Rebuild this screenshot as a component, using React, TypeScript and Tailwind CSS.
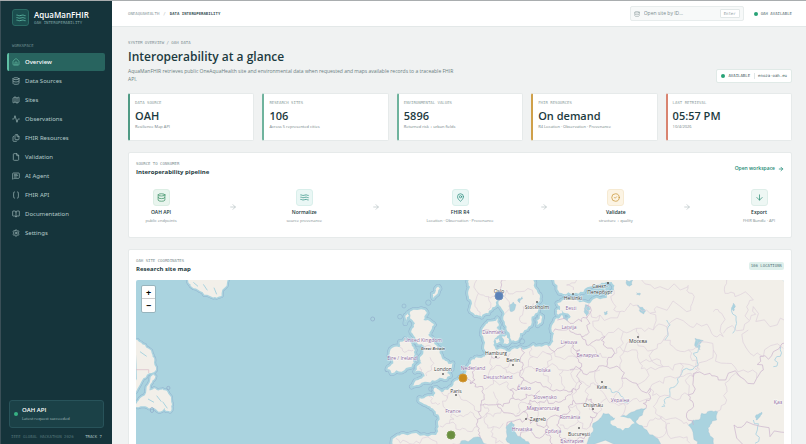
import React from 'react'
import {
  Activity,
  ArrowDown,
  ArrowRight,
  BookOpen,
  Braces,
  CircleCheck,
  Database,
  File,
  Files,
  House,
  Map as MapIcon,
  MapPin,
  MessageSquareText,
  Settings
} from 'lucide-react'

type IconType = React.ComponentType<{ className?: string; strokeWidth?: number }>
type Point = [number, number]

/* ================= ICONS ================= */
function Waves({ className }: { className?: string; strokeWidth?: number }) {
  return (
    <svg viewBox="0 0 24 24" fill="none" stroke="currentColor" strokeWidth="2" strokeLinecap="round" className={className}>
      <path d="M2 5c3 0 3 1.500 6.500 1.500S13 5 16 5s3 1.500 6 1.500" />
      <path d="M2 11c3 0 3 1.500 6.500 1.500S13 11 16 11s3 1.500 6 1.500" />
      <path d="M2 17c3 0 3 1.500 6.500 1.500S13 17 16 17s3 1.500 6 1.500" />
    </svg>
  )
}

/* ================= DATA ================= */
const navItems: { label: string; icon: IconType }[] = [
  { label: 'Overview', icon: House },
  { label: 'Data Sources', icon: Database },
  { label: 'Sites', icon: MapIcon },
  { label: 'Observations', icon: Activity },
  { label: 'FHIR Resources', icon: Files },
  { label: 'Validation', icon: File },
  { label: 'AI Agent', icon: MessageSquareText },
  { label: 'FHIR API', icon: Braces },
  { label: 'Documentation', icon: BookOpen },
  { label: 'Settings', icon: Settings }
]

const stats = [
  { label: 'DATA SOURCE', value: 'OAH', note: 'Resilience Map API', edge: 'border-l-[#4f9a84]' },
  { label: 'RESEARCH SITES', value: '106', note: 'Across 5 represented cities', edge: 'border-l-[#6fb39d]' },
  { label: 'ENVIRONMENTAL VALUES', value: '5896', note: 'Returned risk + urban fields', edge: 'border-l-[#6fb39d]' },
  { label: 'FHIR RESOURCES', value: 'On demand', note: 'R4 Location · Observation · Provenance', edge: 'border-l-[#cfa04a]' },
  { label: 'LAST RETRIEVAL', value: '05:57 PM', note: '10/4/2026', edge: 'border-l-[#d98470]' }
]

const steps: { title: string; note: string; icon: IconType; tone: string }[] = [
  { title: 'OAH API', note: 'public endpoints', icon: Database, tone: 'bg-[#e9f5ee] border-[#dceee4] text-[#3f9168]' },
  { title: 'Normalize', note: 'source provenance', icon: Waves, tone: 'bg-[#eaf7f5] border-[#d9efeb] text-[#2f8f80]' },
  { title: 'FHIR R4', note: 'Location · Observation · Provenance', icon: MapPin, tone: 'bg-[#eaf7f5] border-[#d9efeb] text-[#2f8f80]' },
  { title: 'Validate', note: 'structure + quality', icon: CircleCheck, tone: 'bg-[#fcf4e4] border-[#f6ead2] text-[#c9973a]' },
  { title: 'Export', note: 'FHIR Bundle · API', icon: ArrowDown, tone: 'bg-[#eef7f4] border-[#deeee9] text-[#2f8f78]' }
]

/* ================= MAP GEOMETRY ================= */
// splits every segment and pushes the middle sideways, so coasts and borders look natural
function rough(points: Point[], amount: number, depth = 2): Point[] {
  let pts = points
  for (let d = 0; d < depth; d++) {
    const next: Point[] = [pts[0]]
    for (let i = 1; i < pts.length; i++) {
      const [x1, y1] = pts[i - 1]
      const [x2, y2] = pts[i]
      const n = Math.sin(x1 * 12.9 + y1 * 78.2 + x2 * 3.7 + y2 * 5.1) * 43758.5
      // long edges lie outside the view and stay straight
      const far = Math.abs(x2 - x1) + Math.abs(y2 - y1) > 200
      const k = far ? 0 : (n - Math.floor(n) - 0.5) * amount
      next.push([(x1 + x2) / 2 - (y2 - y1) * k, (y1 + y2) / 2 + (x2 - x1) * k])
      next.push(pts[i])
    }
    pts = next
  }
  return pts
}

function parse(text: string): Point[] {
  return text.split(' ').map(p => p.split(',').map(Number) as Point)
}

function toPath(text: string, amount = 0.6, close = false) {
  const pts = parse(text)
  if (close) pts.push(pts[0])
  return 'M' + rough(pts, amount).map(([x, y]) => `${x.toFixed(1)} ${y.toFixed(1)}`).join('L') + (close ? 'Z' : '')
}

const lands = [
  // mainland
  '90,640 104,540 108,500 130,492 180,497 228,495 236,470 238,440 222,420 205,408 180,395 178,384 205,378 222,380 226,368 222,355 235,358 245,366 262,360 276,350 283,335 300,322 318,308 325,290 335,270 350,262 368,262 380,255 372,235 370,200 372,170 385,155 412,145 415,160 410,175 418,190 405,205 400,225 412,240 430,238 450,245 480,232 520,225 545,230 565,228 580,215 582,190 580,160 590,145 605,135 612,148 625,155 632,140 612,128 600,120 592,100 605,92 640,88 680,98 700,88 740,84 762,60 755,36 725,38 700,48 670,66 640,72 610,72 592,58 590,20 590,-400 1800,-400 1800,1000 90,1000',
  // scandinavia
  '328,-60 326,30 330,50 325,75 335,95 330,120 345,135 365,140 385,130 405,110 415,88 422,110 430,140 440,170 450,195 455,212 475,210 480,190 505,170 515,140 535,120 530,100 540,80 530,60 520,30 520,-60',
  // great britain
  '150,125 195,120 200,130 190,150 215,158 222,165 210,185 205,195 222,215 238,235 245,262 255,272 278,280 275,298 262,310 270,318 255,328 225,332 195,335 175,345 155,350 175,330 195,318 190,308 165,305 170,290 185,280 180,262 190,250 195,235 185,222 165,215 160,195 155,180 165,160 150,145',
  // ireland
  '120,215 135,208 155,222 165,240 160,265 155,290 125,305 95,310 82,298 100,280 88,258 92,238 118,232',
  // northern isles, hebrides
  '218,72 228,62 236,50 239,56 228,75 220,84',
  '136,140 143,130 147,136 141,150 136,160',
  // danish islands, gotland, saaremaa
  '425,200 440,195 447,208 443,222 430,222',
  '405,208 418,205 422,216 410,220',
  '532,150 541,136 547,140 541,160 533,166',
  '590,122 604,120 606,130 595,134'
]

const westLands = [
  '198,90 205,112 215,125 240,138 270,153 290,158 305,152 312,130 322,90',
  '30,275 52,285 75,300 95,325 103,345 108,375 95,384 70,400 48,440 30,440',
  '48,486 52,470 66,455 80,425 92,396 100,388 106,394 96,412 88,436 102,430 120,434 135,436 148,450 156,478 150,500 138,498 134,488 116,500 98,488 76,484'
]

const waters = [
  // mediterranean and adriatic
  '290,600 298,525 305,512 340,503 365,508 385,525 400,600',
  '438,600 450,520 440,490 440,468 455,455 461,475 482,500 505,515 525,540 540,600',
  // black sea
  '680,530 690,495 697,470 720,445 730,430 750,435 760,445 785,438 800,437 830,420 858,415 848,430 835,445 830,460 860,480 885,500 900,540',
  // caspian
  '985,465 1000,450 1015,450 1025,430 1050,423 1073,425 1070,450 1050,465 1045,485 1060,505 1075,540 1015,540 1000,495',
  // lakes
  '800,30 818,30 816,44 802,46',
  '832,105 848,112 856,124 850,132 838,122',
  '830,68 842,72 838,76 830,74',
  '732,126 742,124 742,132 734,134',
  '448,105 460,96 468,104 458,124 450,122',
  '474,88 486,80 488,86 480,98',
  '676,104 684,106 686,130 680,138 674,120',
  '1005,205 1030,212 1015,222 1020,240 1008,232',
  '1120,100 1126,110 1122,122 1116,114',
  '1186,440 1196,432 1205,426 1200,440 1188,450'
]

const crimea = '752,452 785,440 810,445 824,460 805,474 772,474'

const rivers = [
  '1010,210 1000,250 1012,275 990,300 960,320 945,350',
  '945,350 930,370 915,400 905,410',
  '745,355 760,368 790,382 805,400',
  '1115,112 1128,150 1118,190',
  '1180,450 1192,480 1185,520',
  '920,150 922,180 915,210',
  '1240,290 1250,260 1262,230'
]

const borders = [
  '300,322 318,325 330,340 345,350 370,358 372,380 362,405 355,425 362,445 352,470 356,495 365,508',
  '325,290 345,300 345,330 330,340',
  '380,255 395,262 420,262',
  '372,180 390,186 412,180',
  '484,232 482,262 490,285 480,310 492,330 475,345 450,360 460,385 440,400 415,402 385,405 362,405',
  '492,330 520,338 545,345 570,358 610,360 640,355 665,340 655,310 665,290 650,262 660,240 640,225 605,232 565,228',
  '460,385 490,388 515,375 540,362',
  '415,402 425,420 460,432 490,425 515,410 510,390 540,395 580,400 610,390 625,375 640,355',
  '490,425 500,445 530,455 560,465 600,440 625,410 640,390 680,385 700,400 712,430 690,440 690,470',
  '440,468 470,450 500,445',
  '480,500 520,492 555,490 560,465',
  '555,490 570,510 590,525 620,515 650,510 690,495',
  '600,440 590,465 600,490 620,515',
  '580,185 610,180 640,188 665,200 680,195 690,160 682,140 680,105',
  '592,150 630,160 665,155 682,140',
  '665,200 680,225 700,215 735,200 730,225 755,262 740,290 700,305 665,300 630,300',
  '740,290 780,295 785,325 830,340 870,355 872,385 850,400 858,415',
  '985,375 1000,330 1050,310 1075,330 1140,320 1190,325 1210,300 1200,260 1240,245 1300,230',
  '1000,465 980,430 1000,400 985,375',
  '1120,600 1122,465 1160,455 1230,500 1300,480',
  '415,88 430,70 425,45 440,20'
]

const regions = [
  '690,100 680,120 720,135 780,125 800,115 830,105',
  '735,200 790,185 830,175 880,180 920,170 985,165',
  '830,105 870,130 890,110 980,125 1000,90 980,60 985,45',
  '845,30 900,50 985,50',
  '920,170 910,210 940,230 985,240 1010,270 1000,320 980,340 985,375',
  '985,165 1010,160 1055,190 1090,200 1085,130 1060,125',
  '780,295 790,250 830,210 880,240 910,290 860,300 830,345',
  '910,290 960,280 1010,300 1060,240 1100,280 1150,300 1190,325',
  '1100,30 1095,70 1125,80 1180,90 1165,120 1150,180 1090,190',
  '1165,180 1170,250 1210,260 1270,235',
  '1170,150 1180,110 1230,170 1300,155',
  '1070,425 1100,390 1095,340 1140,320',
  '870,355 900,380 880,410 905,440 960,450 985,465',
  '900,440 920,480 960,500 990,520',
  '500,160 480,140 490,110 520,100',
  '108,505 140,515 180,520 230,515 260,525 300,522',
  '640,60 620,45 650,30',
  '245,366 262,385 250,410 275,430 268,460 240,468',
  '262,385 300,380 325,395 355,425',
  '275,430 310,440 340,430 352,450',
  '268,460 300,480 330,485 352,470',
  '205,378 215,400 240,400',
  '395,262 390,300 400,330 375,358',
  '390,300 430,295 450,250',
  '400,330 440,335 450,360',
  '430,295 455,310 480,310',
  '400,365 410,402',
  '510,228 520,260 505,290 492,330',
  '520,260 560,250 600,262 650,262',
  '560,250 565,290 550,315 570,358',
  '505,290 540,300 565,290 610,300 665,290',
  '610,300 605,330 610,360',
  '370,405 380,430 375,460 400,470 430,460',
  '362,445 400,440 425,420',
  '400,470 395,500 430,520',
  '470,432 475,405 515,400',
  '540,395 535,430 530,455',
  '625,410 660,425 655,455 690,470',
  '655,455 630,470 600,465',
  '720,300 715,345 740,385 712,430',
  '640,300 650,340 690,350 715,345',
  '690,350 680,385',
  '785,325 770,370 790,400 785,438',
  '740,385 790,400 830,385 872,385',
  '690,225 700,260 740,262',
  '640,225 650,262 700,260',
  '650,340 640,390',
  '790,185 780,230 755,262',
  '830,175 835,210',
  '780,230 830,240 840,280 860,300',
  '840,280 880,270 910,290',
  '910,210 880,240',
  '985,240 1010,230 1060,240',
  '960,280 960,320 910,340 870,355',
  '1000,320 960,320',
  '900,380 950,390 985,375',
  '720,135 710,180 735,200',
  '780,125 760,100 762,60',
  '870,130 880,180',
  '700,400 690,420',
  '350,30 355,70 345,110 360,135',
  '355,70 385,80 410,75',
  '385,80 385,120',
  '440,60 480,65 520,75',
  '440,60 435,130',
  '195,235 215,232',
  '210,262 215,300 200,318',
  '120,232 140,245 160,240',
  '178,290 186,300 190,312',
  '885,500 920,480 930,460',
  '850,470 880,450 905,440'
]

const countries: [string, number, number][] = [
  ['United Kingdom', 287, 62],
  ['Éire / Ireland', 266, 80],
  ['Danmark', 357, 54],
  ['Nederland', 337, 90],
  ['Deutschland', 362, 99],
  ['Polska', 407, 92],
  ['Česko', 388, 110],
  ['Slovensko', 409, 119],
  ['Magyarország', 407, 130],
  ['France', 317, 133],
  ['Hrvatska', 386, 151],
  ['Србија', 417, 153],
  ['România', 434, 139],
  ['Eesti', 435, 30],
  ['Latvija', 433, 49],
  ['Lietuva', 433, 64],
  ['България', 436, 163],
  ['Беларусь', 452, 77],
  ['Україна', 484, 122],
  ['Қаз', 642, 124]
]

// label, label x/y, dot x/y
const cities: [string, number, number, number, number][] = [
  ['London', 307, 91, 307, 94],
  ['Paris', 320, 113, 320, 115],
  ['Hamburg', 360, 75, 360, 77],
  ['Berlin', 377, 82, 377, 85],
  ['Stockholm', 401, 29, 401, 22],
  ['Oslo', 363, 13, 363, 16],
  ['Helsinki', 437, 20, 437, 14],
  ['Zagreb', 402, 141, 390, 139],
  ['București', 443, 156, 443, 148],
  ['Chișinău', 457, 127, 457, 129],
  ['Київ', 466, 109, 466, 102],
  ['Москва', 502, 63, 502, 57],
  ['Санкт-', 464, 8, 472, 3],
  ['Петербург', 464, 14, 472, 3]
]

function SiteMap() {
  return (
    <svg viewBox="0 0 648 180" preserveAspectRatio="xMidYMin slice" className="block w-full bg-[#aad3df]" role="img" aria-label="Research site map">
      <g transform="translate(-16 -35) scale(0.33333)" strokeLinejoin="round">
        {westLands.map(d => <path key={d} d={toPath(d, 0.4, true)} fill="none" stroke="#93b3cf" strokeWidth="12" />)}
        {westLands.map(d => <path key={d} d={toPath(d, 0.4, true)} fill="#f2efe9" stroke="#aad3df" strokeWidth="9" />)}
        {westLands.map(d => <path key={d} d={toPath(d, 0.4, true)} fill="#f2efe9" />)}
        <path d="M48 374h38v10" fill="none" stroke="#d9b9c6" strokeWidth="2" />
        <path d="M220 112l14 12M250 118l12 18M282 128l8 20M60 320l20 14M110 452l14 18M128 470l14 20M84 462l18 10" stroke="#aad3df" strokeWidth="3" />
        <circle cx="758" cy="222" r="6" fill="none" stroke="#8fa9c8" strokeWidth="2" />
        <circle cx="145" cy="429" r="5" fill="none" stroke="#8fa9c8" strokeWidth="2" />
        <ellipse cx="96" cy="495" rx="5" ry="8" fill="none" stroke="#8fa9c8" strokeWidth="2" />
      </g>
      <g transform="translate(224 -10) scale(0.33333)" strokeLinejoin="round" fill="none">
        <g stroke="#93b3cf" strokeWidth="16">
          {lands.map(d => <path key={d} d={toPath(d, 0.5, true)} />)}
        </g>
        <g stroke="#aad3df" strokeWidth="13">
          {lands.map(d => <path key={d} d={toPath(d, 0.5, true)} />)}
        </g>
        <g fill="none" stroke="#93b3cf" strokeWidth="2">
          <circle cx="120" cy="140" r="7" />
          <circle cx="132" cy="108" r="6" />
          <circle cx="205" cy="98" r="8" />
          <circle cx="213" cy="357" r="7" />
          <circle cx="486" cy="214" r="8" />
        </g>
        {lands.map(d => <path key={d} d={toPath(d, 0.5, true)} fill="#f2efe9" />)}
        <g fill="#aad3df" stroke="#9bbfd4" strokeWidth="1">
          {waters.map(d => <path key={d} d={toPath(d, 0.5, true)} />)}
        </g>
        <path d={toPath(crimea, 0.5, true)} fill="#f2efe9" />
        <g stroke="#b5d6e2" strokeWidth="3">
          {rivers.map(d => <path key={d} d={toPath(d, 0.9)} />)}
        </g>
        <g stroke="#dccfdb" strokeWidth="2">
          {regions.map(d => <path key={d} d={toPath(d, 0.8)} />)}
        </g>
        <g stroke="#c9b0cc" strokeWidth="2">
          {borders.map(d => <path key={d} d={toPath(d, 0.8)} />)}
        </g>
      </g>
      <g textAnchor="middle" stroke="#ffffff" strokeWidth="1" strokeOpacity="0.7" paintOrder="stroke" className="text-[5px]">
        {countries.map(([name, x, y]) => <text key={name} x={x} y={y} fill="#8d6a9f">{name}</text>)}
        {cities.map(([name, x, y]) => <text key={name} x={x} y={y} fill="#3c3c3c">{name}</text>)}
        <text x="297" y="70" fill="#3c3c3c" className="text-[4px] font-semibold italic">Great Britain</text>
      </g>
      {cities.map(([name, , , x, y]) => <circle key={name} cx={x} cy={y} r="1" fill="#666666" />)}
      <circle cx="363" cy="16" r="4" fill="#5b82b8" stroke="#6d8fbd" />
      <circle cx="327" cy="98" r="4" fill="#c98a1b" stroke="#cf983a" />
      <circle cx="315" cy="155" r="4" fill="#6a8f3f" stroke="#7c9c55" />
    </svg>
  )
}

/* ================= SIDEBAR ================= */
function Sidebar() {
  return (
    <aside className="flex w-28 shrink-0 flex-col border-l border-[#3a4f57] bg-[#15343b] text-[#b4cac9]">
      <div className="flex items-center gap-[5px] pt-2 pl-[11px]">
        <div className="flex size-[17px] items-center justify-center rounded-[3px] border border-[#2b6a64] bg-[#1b4d4e] text-[#62bfa9]">
          <Waves className="size-[10px]" />
        </div>
        <div>
          <div className="text-[8px] leading-[9px] font-semibold text-white">AquaManFHIR</div>
          <div className="font-['DejaVu_Sans_Mono',monospace] text-[4px] leading-[7px] text-[#7fa3a3]">OAH INTEROPERABILITY</div>
        </div>
      </div>

      <div className="mt-[17px] pl-[11px] font-['DejaVu_Sans_Mono',monospace] text-[4px] leading-[6px] text-[#6d8e90]">WORKSPACE</div>
      <nav className="mt-1 flex flex-col gap-px pr-[7px] pl-[6px] font-['Noto_Sans','Open_Sans',sans-serif]">
        {navItems.map(({ label, icon: Icon }, i) => (
          <a
            key={label}
            href="#"
            className={`flex h-[18px] items-center gap-[5px] rounded-[2px] border-l-2 pl-[3px] text-[6px] ${i === 0 ? 'border-[#5fc0a5] bg-[#28645f] font-medium text-white' : 'border-transparent'}`}
          >
            <Icon className={`size-2 ${i === 0 ? 'text-[#67bfa6]' : 'text-[#a3bdbd]'}`} strokeWidth={2} />
            {label}
          </a>
        ))}
      </nav>

      <div className="mt-auto mr-2 ml-2 flex h-7 items-center gap-1 rounded-[3px] border border-[#28535a] bg-[#1b4147] pl-1">
        <span className="size-1 rounded-full bg-[#37b183]" />
        <div>
          <div className="text-[6px] leading-[9px] font-semibold text-white">OAH API</div>
          <div className="text-[4px] leading-[8px] text-[#a3bcbc]">Latest request succeeded</div>
        </div>
      </div>
      <div className="flex justify-between pt-[6px] pr-[10px] pb-1 pl-[10px] font-['DejaVu_Sans_Mono',monospace] text-[4px] leading-[6px]">
        <span className="text-[#54757a]">IEEE GLOBAL HACKATHON 2026</span>
        <span className="text-[#a9c2c2]">TRACK 7</span>
      </div>
    </aside>
  )
}

function Eyebrow({ children }: { children: React.ReactNode }) {
  return <div className="font-['DejaVu_Sans_Mono',monospace] text-[4px] leading-[6px] text-[#7d8f92]">{children}</div>
}

/* ================= PAGE ================= */
export default function App() {
  return (
    <div className="flex h-screen overflow-hidden border-t border-[#a9adaf] bg-[#f0f2f2] font-['Open_Sans','Noto_Sans',sans-serif] text-[#1c3a40]">
      <Sidebar />

      <div className="flex min-w-0 flex-1 flex-col">
        {/* TOP BAR */}
        <header className="flex h-[26px] shrink-0 items-center border-b border-[#e3e8e8] bg-white pr-[14px] pl-4 font-['DejaVu_Sans_Mono',monospace] text-[4px]">
          <span className="text-[#87979a]">ONEAQUAHEALTH</span>
          <span className="px-1 text-[#a8b4b6]">/</span>
          <span className="font-bold text-[#3b5358]">DATA INTEROPERABILITY</span>
          <label className="ml-auto flex h-[15px] w-[114px] items-center gap-1 rounded-[2px] border border-[#e7ecec] bg-[#f7f9f9] px-[3px] text-[#8b9a9d]">
            <Database className="size-[6px] shrink-0" />
            <input
              aria-label="Open site by ID"
              placeholder="Open site by ID..."
              className="min-w-0 flex-1 bg-transparent font-['Open_Sans','Noto_Sans',sans-serif] text-[5px] outline-none placeholder:text-[#7b8b8e]"
            />
            <kbd className="rounded-[1px] border border-[#e1e7e7] bg-white px-[3px] font-['DejaVu_Sans_Mono',monospace] text-[4px] leading-[7px]">Enter</kbd>
          </label>
          <span className="ml-[10px] size-1 rounded-full bg-[#27a276]" />
          <span className="ml-[3px] text-[#50696d]">OAH AVAILABLE</span>
        </header>

        <main className="min-h-0 flex-1 overflow-y-auto pt-[13px] pr-[14px] pl-4 [scrollbar-width:none]">
          {/* PAGE HEADER */}
          <div className="flex items-end justify-between">
            <div>
              <Eyebrow>SYSTEM OVERVIEW / OAH DATA</Eyebrow>
              <h1 className="mt-[3px] text-[12px] leading-[16px] font-semibold">Interoperability at a glance</h1>
              <p className="mt-[2px] max-w-[332px] text-[5px] leading-[8px] text-[#6a7d80]">
                AquaManFHIR retrieves public OneAquaHealth site and environmental data when requested and maps available records to a traceable FHIR API.
              </p>
            </div>
            <div className="flex h-[14px] items-center gap-[3px] rounded-[2px] border border-[#e0eae7] bg-white px-1 font-['DejaVu_Sans_Mono',monospace] text-[4px] text-[#3f5a5e]">
              <span className="size-1 rounded-full bg-[#27a276]" />
              <span>AVAILABLE</span>
              <span className="ml-px border-l border-[#e0e6e6] pl-[3px]">enoza-oah.eu</span>
            </div>
          </div>

          {/* STATS */}
          <section className="mt-[10px] grid grid-cols-5 gap-2">
            {stats.map(s => (
              <div key={s.label} className={`h-12 rounded-[2px] border border-l-2 border-[#e6eaea] bg-white pt-[6px] pl-[5px] ${s.edge}`}>
                <div className="font-['DejaVu_Sans_Mono',monospace] text-[4px] leading-[6px] text-[#909fa1]">{s.label}</div>
                <div className="mt-[3px] text-[11px] leading-[14px] font-semibold">{s.value}</div>
                <div className="text-[4px] leading-[8px] text-[#6f8184]">{s.note}</div>
              </div>
            ))}
          </section>

          {/* PIPELINE */}
          <section className="mt-[11px] rounded-[2px] border border-[#e6eaea] bg-white px-[7px] pt-2 pb-[13px]">
            <div className="flex items-center justify-between">
              <div>
                <Eyebrow>SOURCE TO CONSUMER</Eyebrow>
                <h2 className="mt-px text-[6px] leading-[9px] font-bold">Interoperability pipeline</h2>
              </div>
              <a href="#" className="flex items-center gap-[3px] text-[5px] font-semibold text-[#1e8a75]">
                Open workspace <ArrowRight className="size-[6px]" strokeWidth={3} />
              </a>
            </div>
            <div className="mt-3 flex items-center">
              {steps.map(({ title, note, icon: Icon, tone }, i) => (
                <React.Fragment key={title}>
                  {i > 0 && (
                    <div className="flex flex-1 justify-center text-[#b3bfc1]">
                      <ArrowRight className="size-2" />
                    </div>
                  )}
                  <div className="flex min-w-[50px] flex-col items-center px-1">
                    <div className={`flex size-[17px] items-center justify-center rounded-[3px] border ${tone}`}>
                      <Icon className="size-[9px]" strokeWidth={2} />
                    </div>
                    <div className="mt-[2px] text-[5px] leading-[8px] font-semibold">{title}</div>
                    <div className="mt-[2px] text-[4px] leading-[6px] text-[#7b8b8e]">{note}</div>
                  </div>
                </React.Fragment>
              ))}
            </div>
          </section>

          {/* MAP */}
          <section className="mt-[11px] rounded-[2px] border border-[#e6eaea] bg-white px-[7px] pt-2 pb-2">
            <div className="flex items-center justify-between">
              <div>
                <Eyebrow>OAH SITE COORDINATES</Eyebrow>
                <h2 className="mt-px text-[6px] leading-[9px] font-bold">Research site map</h2>
              </div>
              <span className="rounded-[2px] bg-[#dff0ec] px-[2px] font-['DejaVu_Sans_Mono',monospace] text-[4px] leading-[8px] text-[#56757a]">106 LOCATIONS</span>
            </div>
            <div className="relative mt-[6px] overflow-hidden rounded-[2px]">
              <SiteMap />
              <div className="absolute top-[5px] left-[5px] flex flex-col divide-y divide-[#cccccc] rounded-[2px] border border-[#97b4bd] bg-white text-[9px] leading-[13px] font-bold text-black">
                <button aria-label="Zoom in" className="size-[13px]">+</button>
                <button aria-label="Zoom out" className="size-[13px]">−</button>
              </div>
            </div>
          </section>
        </main>
      </div>
    </div>
  )
}
